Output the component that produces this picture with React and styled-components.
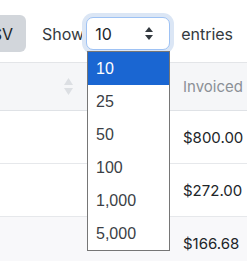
import styled, { createGlobalStyle } from "styled-components";

const GlobalStyle = createGlobalStyle`
	html, body {
		margin: 0;
		padding: 0;
		background: #fff;
		font-family: Inter, "Liberation Sans", sans-serif;
		color: #212529;
	}
`;

const rows = ["$800.00", "$272.00", "$166.68"];
const options = ["10", "25", "50", "100", "1,000", "5,000"];

const SortIcon = () => (
	<svg width="9" height="17" viewBox="0 0 9 17">
		<path d="M4.5 0 L9 7 L0 7 Z" fill="#dcdfe3" />
		<path d="M0 10 L9 10 L4.5 17 Z" fill="#dcdfe3" />
	</svg>
);

const SelectArrows = () => (
	<svg width="8" height="13" viewBox="0 0 8 13">
		<path d="M4 0 L8 5 L0 5 Z" fill="#343a40" />
		<path d="M0 8 L8 8 L4 13 Z" fill="#343a40" />
	</svg>
);

export default function App() {
	return (
		<>
			<GlobalStyle />
			<StyledPage>
				<Toolbar>
					<ExportButton>CSV</ExportButton>
					<Label>Show</Label>
					<SelectBox>
						<span>10</span>
						<SelectArrows />
					</SelectBox>
					<Label className="entries">entries</Label>
				</Toolbar>

				<Table>
					<HeaderRow>
						<Cell className="sort">
							<SortIcon />
						</Cell>
						<Cell />
						<Cell className="money head">Invoiced</Cell>
					</HeaderRow>
					{rows.map((value, i) => (
						<Row key={value} $striped={i === 2}>
							<Cell />
							<Cell />
							<Cell className="money">{value}</Cell>
						</Row>
					))}
				</Table>

				<OptionList>
					{options.map((opt, i) => (
						<Option key={opt} $selected={i === 0}>
							{opt}
						</Option>
					))}
				</OptionList>
			</StyledPage>
		</>
	);
}

const StyledPage = styled.div`
	position: relative;
	width: 247px;
	height: 261px;
	overflow: hidden;
`;

const Toolbar = styled.div`
	display: flex;
	align-items: center;
	height: 37px;
	padding: 15px 0 10px;
`;

const ExportButton = styled.button`
	height: 37px;
	margin-left: -33px;
	padding: 0 13px;
	border: none;
	border-radius: 6px;
	background-color: #d2d6db;
	color: #212529;
	font-family: Inter, sans-serif;
	font-size: 16px;
	margin-right: 16px;
`;

const Label = styled.span`
	font-size: 16px;
	color: #343a40;
	margin-right: 2px;

	&.entries {
		margin-left: 11px;
	}
`;

const SelectBox = styled.div`
	box-sizing: border-box;
	display: flex;
	align-items: center;
	justify-content: space-between;
	width: 84px;
	height: 33px;
	padding: 0 16px 0 8px;
	border: 1px solid #9ec2f4;
	border-radius: 7px;
	box-shadow: 0 0 0 4px #dbe6f5;
	font-size: 16px;
	color: #212529;
	background: #fff;
`;

const Table = styled.div`
	border-top: 1px solid #e3e5e8;
`;

const HeaderRow = styled.div`
	display: grid;
	grid-template-columns: 76px 100px 71px;
	height: 47px;
	background: #f5f6f8;
	border-bottom: 1px solid #dfe2e6;
`;

const Row = styled.div`
	display: grid;
	grid-template-columns: 76px 100px 71px;
	height: 52px;
	background: ${(p) => (p.$striped ? "#f8f8fa" : "#fff")};
	border-bottom: 1px solid #e6e8eb;
`;

const Cell = styled.div`
	display: flex;
	align-items: center;

	&.sort {
		justify-content: flex-end;
		padding-right: 3px;
	}

	&.money {
		padding-left: 7px;
		font-size: 15px;
		color: #212529;
		white-space: nowrap;
	}

	&.head {
		color: #8b9096;
	}
`;

const OptionList = styled.div`
	position: absolute;
	top: 51px;
	left: 87px;
	width: 83px;
	box-sizing: border-box;
	border: 1px solid #767676;
	background: #fff;
`;

const Option = styled.div`
	height: 33px;
	display: flex;
	align-items: center;
	padding-left: 8px;
	font-family: "Liberation Sans", Arial, sans-serif;
	font-size: 16px;
	color: ${(p) => (p.$selected ? "#fff" : "#3b3f46")};
	background: ${(p) => (p.$selected ? "#1a66d2" : "transparent")};
`;
